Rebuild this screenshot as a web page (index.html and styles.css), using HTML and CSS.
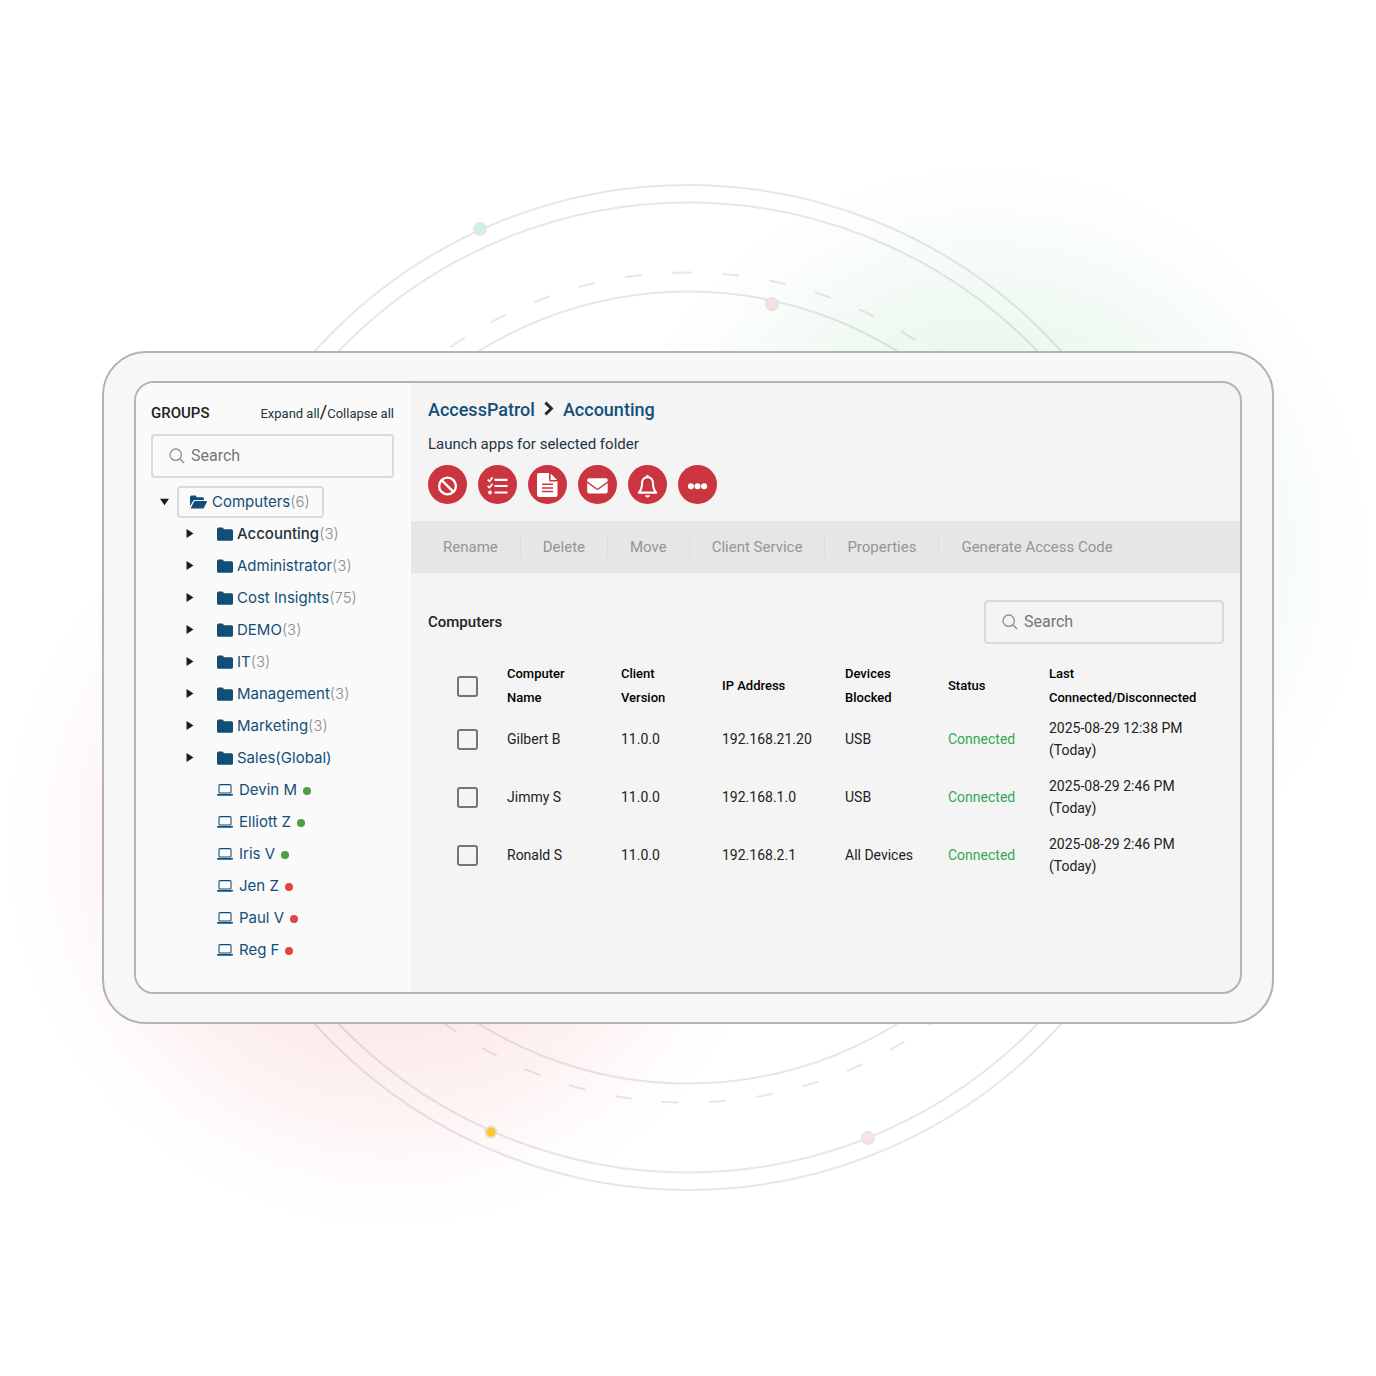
FILE: index.html
```
<!DOCTYPE html>
<html lang="en">
<head>
    <meta charset="utf-8">
    <title>AccessPatrol</title>
    <link rel="stylesheet" href="styles.css">
</head>
<body>
    <!-- shared icons -->
    <svg class="sprite" aria-hidden="true">
        <symbol id="search" viewBox="0 0 16 16">
            <circle cx="6.7" cy="6.7" r="5.7" fill="none" stroke="currentColor" stroke-width="1.3"/>
            <path d="M10.8 10.8L15 15" stroke="currentColor" stroke-width="1.5"/>
        </symbol>
        <symbol id="folder" viewBox="0 0 16 14">
            <path d="M1.5 0.5H5.5L7.2 2.2H14.5Q16 2.2 16 3.7V12.2Q16 13.7 14.5 13.7H1.5Q0 13.7 0 12.2V2Q0 .5 1.5.5Z" fill="currentColor"/>
        </symbol>
        <symbol id="folder-open" viewBox="0 0 17 14">
            <path d="M0 11V2Q0 .5 1.5.5H5.4L7 2.2H12.5Q14 2.2 14 3.7V5H5Q3.6 5 3 6.2Z" fill="currentColor"/>
            <path d="M.8 12.9L3.9 6.9Q4.3 6.1 5.2 6.1H16.3Q17.3 6.1 16.8 7L14.3 12.3Q13.8 13.5 12.6 13.5H1.2Q.5 13.5.8 12.9Z" fill="currentColor"/>
        </symbol>
        <symbol id="laptop" viewBox="0 0 16 12">
            <rect x="2" y=".6" width="12" height="8.4" rx="1" fill="none" stroke="currentColor" stroke-width="1.1"/>
            <path d="M0 10H16V10.4Q16 11.7 14.6 11.7H1.4Q0 11.7 0 10.4Z" fill="currentColor"/>
        </symbol>
        <symbol id="right" viewBox="0 0 8 9"><path d="M.5 0L7.5 4.5L.5 9Z" fill="currentColor"/></symbol>
        <symbol id="down" viewBox="0 0 9 8"><path d="M0 .8H9L4.5 7.2Z" fill="currentColor"/></symbol>
    </svg>

    <!-- rings and colour glows -->
    <svg class="backdrop" viewBox="0 0 1376 1376" aria-hidden="true">
        <defs>
            <radialGradient id="green">
                <stop offset="0" stop-color="#3bb35c" stop-opacity=".14"/>
                <stop offset=".5" stop-color="#3bb35c" stop-opacity=".1"/>
                <stop offset=".72" stop-color="#3bb35c" stop-opacity=".055"/>
                <stop offset=".87" stop-color="#3bb35c" stop-opacity=".02"/>
                <stop offset="1" stop-color="#3bb35c" stop-opacity="0"/>
            </radialGradient>
            <radialGradient id="red">
                <stop offset="0" stop-color="#e5393f" stop-opacity=".14"/>
                <stop offset=".5" stop-color="#e5393f" stop-opacity=".1"/>
                <stop offset=".72" stop-color="#e5393f" stop-opacity=".055"/>
                <stop offset=".87" stop-color="#e5393f" stop-opacity=".02"/>
                <stop offset="1" stop-color="#e5393f" stop-opacity="0"/>
            </radialGradient>
        </defs>
        <g fill="none" stroke="#e7e7e7" stroke-width="2">
            <circle cx="688" cy="687.5" r="502.5"/>
            <circle cx="688" cy="687.5" r="485"/>
            <circle cx="688" cy="687.5" r="396"/>
            <circle cx="688" cy="687.5" r="415" stroke-dasharray="17 30.34" transform="rotate(-91.8 688 687.5)"/>
        </g>
        <g stroke="#e5e5e5" stroke-width="2">
            <circle cx="480" cy="229" r="6" fill="#d0efe4"/>
            <circle cx="772" cy="304" r="6" fill="#fbe2e2"/>
            <circle cx="868" cy="1138" r="6" fill="#fde2e4"/>
        </g>
        <circle cx="985" cy="550" r="390" fill="url(#green)"/>
        <circle cx="392" cy="840" r="390" fill="url(#red)"/>
        <circle cx="491" cy="1132" r="5.5" fill="#fcc72c" stroke="#e8dfd0" stroke-width="2"/>
    </svg>

    <div class="frame">
        <div class="screen">
            <aside class="sidebar">
                <div class="groups-header">
                    <h2>GROUPS</h2>
                    <div class="expand"><button>Expand all</button>/<button>Collapse all</button></div>
                </div>
                <label class="search">
                    <svg width="16" height="16"><use href="#search"/></svg>
                    <input type="text" placeholder="Search" aria-label="Search groups">
                </label>

                <div class="row root">
                    <button class="toggle" aria-label="Collapse Computers"><svg width="9" height="8"><use href="#down"/></svg></button>
                    <a href="#" class="selected"><svg width="17" height="14"><use href="#folder-open"/></svg><span>Computers<i>(6)</i></span></a>
                </div>
                <ul class="tree">
                    <li class="row"><button class="toggle" aria-label="Expand Accounting"><svg width="8" height="9"><use href="#right"/></svg></button><a href="#" class="active"><svg width="16" height="14"><use href="#folder"/></svg><span>Accounting<i>(3)</i></span></a></li>
                    <li class="row"><button class="toggle" aria-label="Expand Administrator"><svg width="8" height="9"><use href="#right"/></svg></button><a href="#"><svg width="16" height="14"><use href="#folder"/></svg><span>Administrator<i>(3)</i></span></a></li>
                    <li class="row"><button class="toggle" aria-label="Expand Cost Insights"><svg width="8" height="9"><use href="#right"/></svg></button><a href="#"><svg width="16" height="14"><use href="#folder"/></svg><span>Cost Insights<i>(75)</i></span></a></li>
                    <li class="row"><button class="toggle" aria-label="Expand DEMO"><svg width="8" height="9"><use href="#right"/></svg></button><a href="#"><svg width="16" height="14"><use href="#folder"/></svg><span>DEMO<i>(3)</i></span></a></li>
                    <li class="row"><button class="toggle" aria-label="Expand IT"><svg width="8" height="9"><use href="#right"/></svg></button><a href="#"><svg width="16" height="14"><use href="#folder"/></svg><span>IT<i>(3)</i></span></a></li>
                    <li class="row"><button class="toggle" aria-label="Expand Management"><svg width="8" height="9"><use href="#right"/></svg></button><a href="#"><svg width="16" height="14"><use href="#folder"/></svg><span>Management<i>(3)</i></span></a></li>
                    <li class="row"><button class="toggle" aria-label="Expand Marketing"><svg width="8" height="9"><use href="#right"/></svg></button><a href="#"><svg width="16" height="14"><use href="#folder"/></svg><span>Marketing<i>(3)</i></span></a></li>
                    <li class="row"><button class="toggle" aria-label="Expand Sales"><svg width="8" height="9"><use href="#right"/></svg></button><a href="#"><svg width="16" height="14"><use href="#folder"/></svg><span>Sales(Global)</span></a></li>
                    <li class="row computer"><a href="#"><svg width="16" height="12"><use href="#laptop"/></svg>Devin M<b class="dot on"></b></a></li>
                    <li class="row computer"><a href="#"><svg width="16" height="12"><use href="#laptop"/></svg>Elliott Z<b class="dot on"></b></a></li>
                    <li class="row computer"><a href="#"><svg width="16" height="12"><use href="#laptop"/></svg>Iris V<b class="dot on"></b></a></li>
                    <li class="row computer"><a href="#"><svg width="16" height="12"><use href="#laptop"/></svg>Jen Z<b class="dot"></b></a></li>
                    <li class="row computer"><a href="#"><svg width="16" height="12"><use href="#laptop"/></svg>Paul V<b class="dot"></b></a></li>
                    <li class="row computer"><a href="#"><svg width="16" height="12"><use href="#laptop"/></svg>Reg F<b class="dot"></b></a></li>
                </ul>
            </aside>

            <main>
                <nav class="breadcrumb">
                    <a href="#">AccessPatrol</a>
                    <svg width="10" height="18" viewBox="0 0 10 18"><path d="M1.4 1.6L7.4 7.5L1.4 13.4" fill="none" stroke="#222d35" stroke-width="3"/></svg>
                    <a href="#">Accounting</a>
                </nav>
                <p class="launch">Launch apps for selected folder</p>
                <div class="apps">
                    <button aria-label="Block">
                        <svg width="39" height="39" viewBox="0 0 39 39" fill="none" stroke="#fff" stroke-width="2.4"><circle cx="19.5" cy="21" r="8.4"/><path d="M13.6 15.1L25.4 26.9"/></svg>
                    </button>
                    <button aria-label="Tasks">
                        <svg width="39" height="39" viewBox="0 0 39 39" fill="none" stroke="#fff" stroke-width="2.2"><path d="M16.5 14.8H29.5M16.5 21H29.5M16.5 27.5H29.5"/><path d="M9.6 14.6L11.5 16.2L14.6 12.4M9.6 21L11.5 22.6L14.6 18.8" stroke-width="1.7"/><circle cx="12" cy="27.5" r="1.9" fill="#fff" stroke="none"/></svg>
                    </button>
                    <button aria-label="Reports">
                        <svg width="39" height="39" viewBox="0 0 39 39"><path d="M10.5 8H21V15Q21 16.5 22.5 16.5H29.5V30Q29.5 32 27.5 32H11.5Q9 32 9 30V9.5Q9 8 10.5 8ZM22.6 8.6L29 15H22.6Z" fill="#fff"/><path d="M14 19.3H25M14 23H25M14 26.6H25" stroke="#cb353f" stroke-width="1.5"/></svg>
                    </button>
                    <button aria-label="Email">
                        <svg width="39" height="39" viewBox="0 0 39 39" fill="#fff"><path d="M10.8 13.3H28Q29.7 13.3 29.7 15V16.2L19.5 23.8L9.2 16.2V15Q9.2 13.3 10.8 13.3Z"/><path d="M9.2 18L18.2 24.6Q19.5 25.5 20.8 24.6L29.7 18V26.6Q29.7 28.4 28 28.4H10.8Q9.2 28.4 9.2 26.6Z"/></svg>
                    </button>
                    <button aria-label="Alerts">
                        <svg width="39" height="39" viewBox="0 0 39 39"><path d="M19.5 12.3C15.6 12.3 14 15.2 14 18.5C14 23.5 12.7 25.5 10.8 27.6H28.2C26.3 25.5 25 23.5 25 18.5C25 15.2 23.4 12.3 19.5 12.3Z" fill="none" stroke="#fff" stroke-width="2.1" stroke-linejoin="round"/><path d="M18.4 10.3Q19.5 9.2 20.6 10.3V12.4H18.4ZM16.9 30.2H22.1Q21.7 32.6 19.5 32.6T16.9 30.2Z" fill="#fff"/></svg>
                    </button>
                    <button aria-label="More">
                        <svg width="39" height="39" viewBox="0 0 39 39" fill="#fff"><circle cx="12.9" cy="21.3" r="3"/><circle cx="19.5" cy="21.3" r="3"/><circle cx="26.1" cy="21.3" r="3"/></svg>
                    </button>
                </div>

                <div class="toolbar">
                    <button>Rename</button>
                    <button>Delete</button>
                    <button>Move</button>
                    <button>Client Service</button>
                    <button>Properties</button>
                    <button>Generate Access Code</button>
                </div>

                <section class="computers">
                    <div class="computers-header">
                        <h2>Computers</h2>
                        <label class="search">
                            <svg width="16" height="16"><use href="#search"/></svg>
                            <input type="text" placeholder="Search" aria-label="Search computers">
                        </label>
                    </div>
                    <table>
                        <thead>
                            <tr>
                                <th class="check"><input type="checkbox" aria-label="Select all"></th>
                                <th class="name">Computer<br>Name</th>
                                <th class="version">Client<br>Version</th>
                                <th class="ip">IP Address</th>
                                <th class="devices">Devices<br>Blocked</th>
                                <th class="status">Status</th>
                                <th>Last<br>Connected/Disconnected</th>
                            </tr>
                        </thead>
                        <tbody>
                            <tr>
                                <td class="check"><input type="checkbox" aria-label="Gilbert B"></td>
                                <td>Gilbert B</td>
                                <td>11.0.0</td>
                                <td>192.168.21.20</td>
                                <td>USB</td>
                                <td class="connected">Connected</td>
                                <td>2025-08-29 12:38 PM<br>(Today)</td>
                            </tr>
                            <tr>
                                <td class="check"><input type="checkbox" aria-label="Jimmy S"></td>
                                <td>Jimmy S</td>
                                <td>11.0.0</td>
                                <td>192.168.1.0</td>
                                <td>USB</td>
                                <td class="connected">Connected</td>
                                <td>2025-08-29 2:46 PM<br>(Today)</td>
                            </tr>
                            <tr>
                                <td class="check"><input type="checkbox" aria-label="Ronald S"></td>
                                <td>Ronald S</td>
                                <td>11.0.0</td>
                                <td>192.168.2.1</td>
                                <td>All Devices</td>
                                <td class="connected">Connected</td>
                                <td>2025-08-29 2:46 PM<br>(Today)</td>
                            </tr>
                        </tbody>
                    </table>
                </section>
            </main>
        </div>
    </div>
</body>
</html>
```
FILE: styles.css
```
* {
    box-sizing: border-box;
}
body {
    margin: 0;
    min-height: 100vh;
    padding: 0 102px 2px;
    display: flex;
    align-items: center;
    position: relative;
    background-color: #fff;
    font-family: Roboto, sans-serif;
    font-size: 15px;
    color: #222;
}
button {
    padding: 0;
    border: none;
    background: none;
    font: inherit;
    color: inherit;
    cursor: pointer;
}
a {
    color: #124f78;
    text-decoration: none;
}
h2 {
    margin: 0;
    font-size: 15px;
    font-weight: 500;
}
.sprite {
    position: absolute;
    width: 0;
    height: 0;
}
.backdrop {
    position: absolute;
    top: 0;
    left: 0;
    width: 100%;
    height: 100%;
}
.frame {
    position: relative;
    flex: 1;
    padding: 28px 30px;
    border: 2px solid #b3b3b3;
    border-radius: 44px;
    background-color: #f7f7f7;
}
.screen {
    display: flex;
    overflow: hidden;
    border: 2px solid #b3b3b3;
    border-radius: 20px;
    background-color: #f4f4f4;
}

/* sidebar */
.sidebar {
    width: 275px;
    padding: 18px 17px 26px 15px;
    background-color: #fafafa;
}
.groups-header {
    display: flex;
    justify-content: space-between;
    align-items: center;
    height: 24px;
    margin-bottom: 9px;
}
.expand {
    font-size: 18px;
    line-height: 24px;
    color: #111;
}
.expand button {
    font-size: 13px;
    color: #22333f;
}
.search {
    display: flex;
    align-items: center;
    gap: 6px;
    height: 44px;
    padding: 0 16px;
    border: 2px solid #dadada;
    border-radius: 4px;
    color: #8a8f98;
}
.search input {
    flex: 1;
    min-width: 0;
    padding: 0;
    border: none;
    outline: none;
    background: none;
    font: inherit;
    font-size: 16px;
    color: #222;
}
.search input::placeholder {
    color: #757575;
}
.row {
    display: flex;
    align-items: center;
    height: 32px;
    font-family: Inter, sans-serif;
}
.row a {
    display: flex;
    align-items: center;
    gap: 4px;
}
.row i {
    font-style: normal;
    font-weight: 300;
    color: #8c8c8c;
}
.row svg {
    display: block;
    flex: none;
}
.root {
    margin-top: 8px;
}
.toggle {
    display: flex;
    justify-content: center;
    width: 26px;
    color: #1c1c1c;
}
.row .selected {
    height: 32px;
    padding: 0 12px 0 11px;
    gap: 5px;
    border: 2px solid #dadada;
    border-radius: 4px;
}
.tree {
    margin: 0;
    padding: 0 0 0 26px;
    list-style: none;
}
.tree .toggle {
    margin-right: 14px;
}
.active span {
    color: #22333f;
    font-weight: 500;
}
.row .active i {
    font-weight: 300;
}
.computer {
    padding-left: 40px;
}
.computer a {
    gap: 6px;
}
.dot {
    width: 8px;
    height: 8px;
    margin-top: 2px;
    border-radius: 50%;
    background-color: #e2453f;
}
.dot.on {
    background-color: #4e9f41;
}

/* main panel */
main {
    flex: 1;
    min-width: 0;
}
.breadcrumb {
    display: flex;
    align-items: center;
    gap: 9px;
    height: 24px;
    margin: 15px 17px 0;
    font-size: 18px;
    font-weight: 500;
}
.launch {
    margin: 10px 17px 9px;
    line-height: 24px;
    color: #22333f;
}
.apps {
    display: flex;
    gap: 11px;
    margin: 0 17px 17px;
}
.apps button {
    width: 39px;
    height: 39px;
    border-radius: 50%;
    background-color: #cb353f;
}
.apps svg {
    display: block;
}
.toolbar {
    display: flex;
    align-items: center;
    height: 52px;
    padding: 0 10px;
    background-color: #e6e6e6;
}
.toolbar button {
    height: 20px;
    padding: 0 22px;
    border-right: 1px solid #dcdcdc;
    color: #959595;
}
.toolbar button:last-child {
    border-right: none;
}
.computers {
    padding: 27px 16px 16px 17px;
}
.computers-header {
    display: flex;
    justify-content: space-between;
    align-items: center;
    margin-bottom: 18px;
}
.computers-header .search {
    width: 240px;
}
table {
    width: 100%;
    table-layout: fixed;
    border-collapse: collapse;
    font-size: 14px;
}
th, td {
    padding: 0;
    text-align: left;
    vertical-align: middle;
}
th {
    font-size: 13px;
    font-weight: 500;
    line-height: 24px;
    color: #000;
}
td {
    height: 58px;
    line-height: 22px;
}
th.check, td.check {
    width: 79px;
    text-align: center;
}
.name {
    width: 114px;
}
.version {
    width: 101px;
}
.ip {
    width: 123px;
}
.devices {
    width: 103px;
}
.status {
    width: 101px;
}
.connected {
    color: #33a853;
}
input[type="checkbox"] {
    appearance: none;
    display: inline-block;
    width: 21px;
    height: 21px;
    margin: 0;
    border: 2px solid #757575;
    border-radius: 3px;
    vertical-align: middle;
}
input[type="checkbox"]:checked {
    background-color: #757575;
}
```
